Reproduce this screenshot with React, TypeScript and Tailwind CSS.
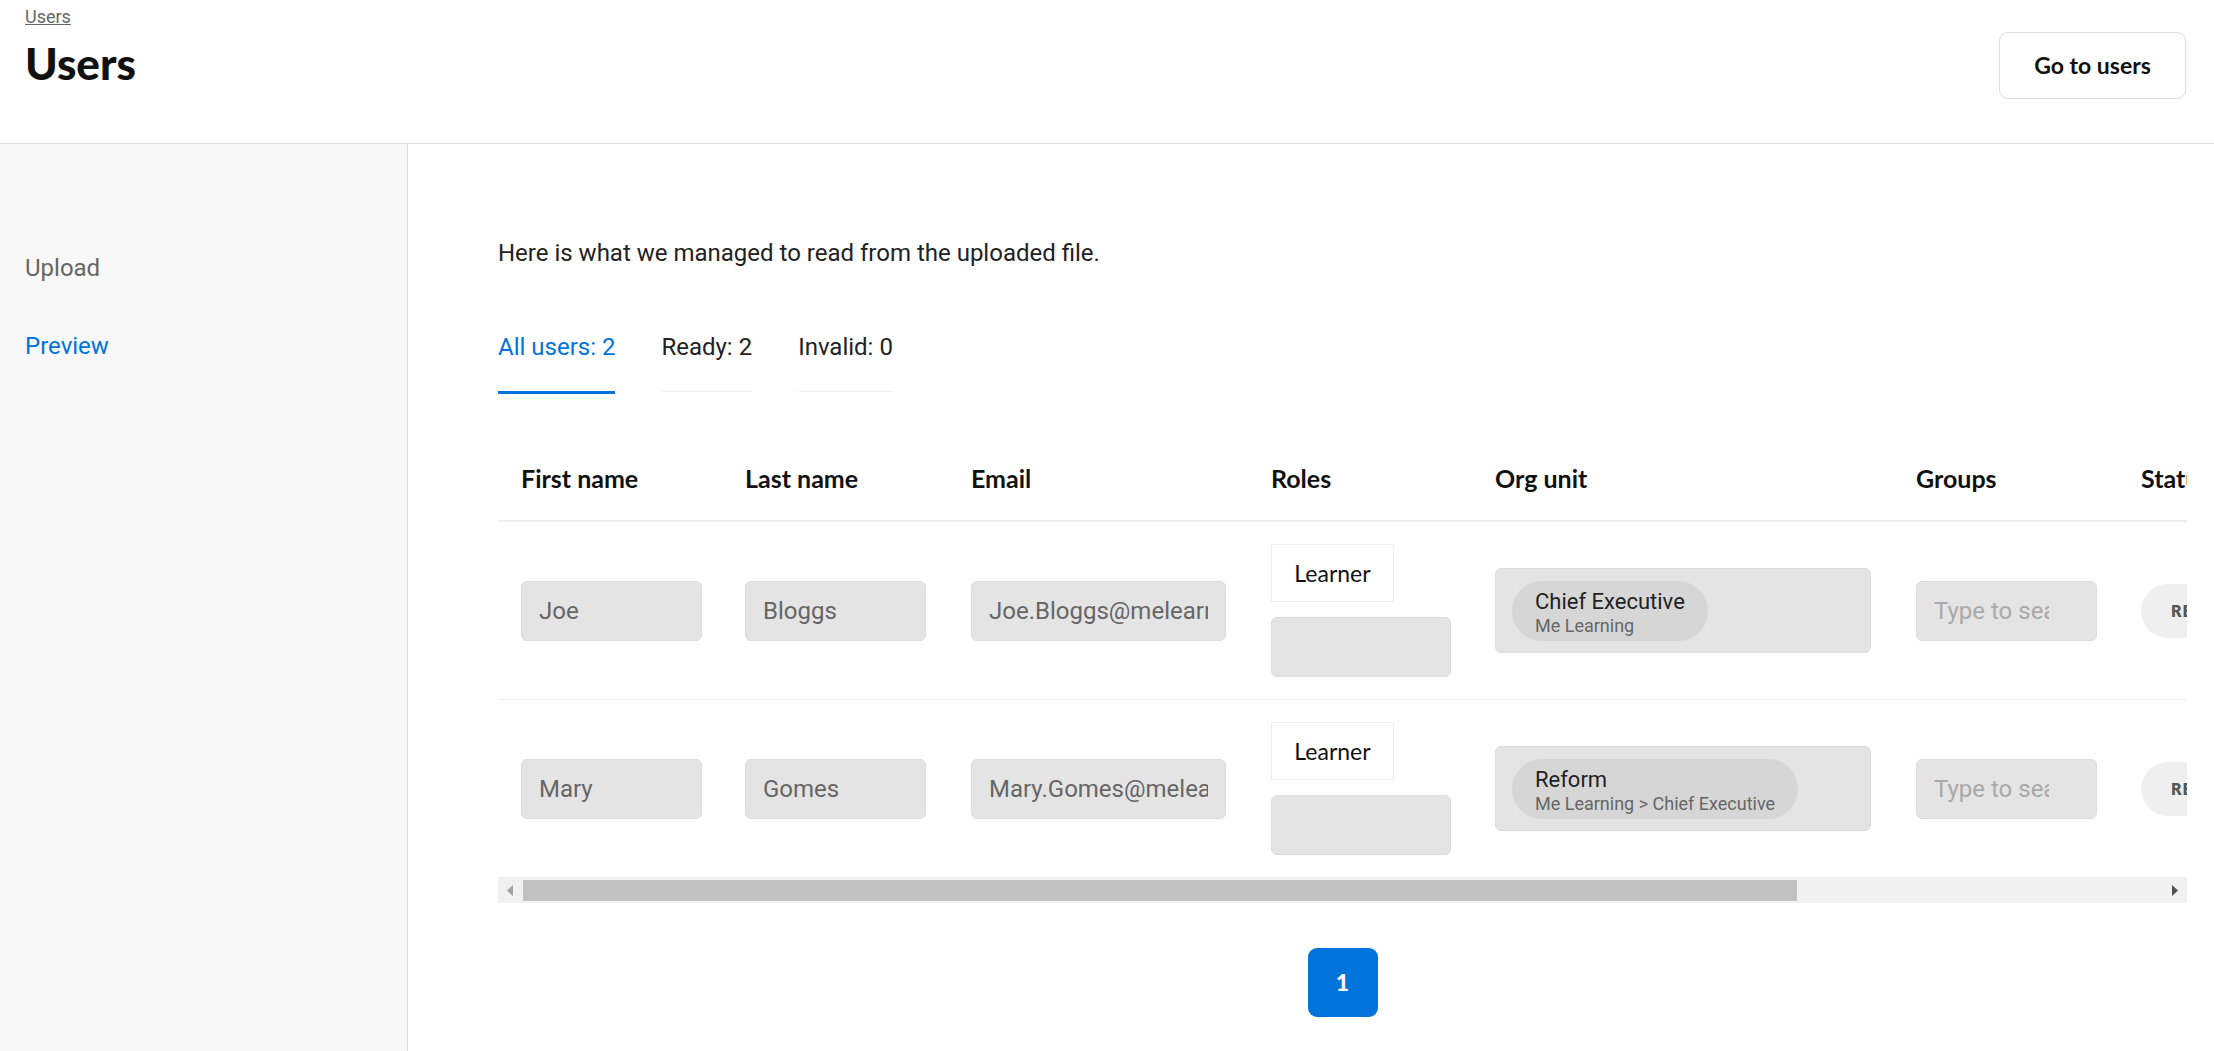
import React from "react";

const Input = ({ text, w, placeholder }: { text: string; w: string; placeholder?: boolean }) => (
  <div
    className={`${w} h-[60px] rounded-[6px] bg-[#e4e4e4] border border-[#dcdcdc] flex items-center overflow-hidden whitespace-nowrap text-[24px] ${
      placeholder ? "pl-[17px] pr-[47px] text-[#a9a9a9]" : "pl-[17px] pr-[17px] text-[#666666]"
    }`}
  >
    <span className="block overflow-hidden">{text}</span>
  </div>
);

const Roles = () => (
  <div className="flex flex-col gap-[15px]">
    <div className="w-[123px] h-[58px] border border-[#eeeeee] bg-white flex items-center justify-center text-[23px] font-['Lato',sans-serif] text-[#111111]">
      Learner
    </div>
    <div className="w-[180px] h-[60px] rounded-[6px] bg-[#e4e4e4] border border-[#dcdcdc]" />
  </div>
);

const Org = ({ name, path }: { name: string; path: string }) => (
  <div className="w-[376px] h-[85px] rounded-[6px] bg-[#e4e4e4] border border-[#dcdcdc] pl-[16px] flex items-center">
    <div className="inline-flex flex-col rounded-full bg-[#d6d6d6] pl-[23px] pr-[23px] pt-[7px] pb-[4px] whitespace-nowrap">
      <span className="text-[22px] leading-[27px] text-[#222222]">{name}</span>
      <span className="text-[18px] leading-[22px] text-[#666666]">{path}</span>
    </div>
  </div>
);

const Status = () => (
  <div className="h-[54px] rounded-full bg-[#efefef] pl-[30px] pr-[30px] flex items-center text-[16px] font-extrabold tracking-[1px] text-[#555555] font-['Lato',sans-serif]">
    READY
  </div>
);

const Row = ({ first, last, email, org, path }: { first: string; last: string; email: string; org: string; path: string }) => (
  <div className="flex h-[178px] items-center border-b border-[#eeeeee]">
    <div className="w-[224px] shrink-0 pl-[23px]">
      <Input text={first} w="w-[181px]" />
    </div>
    <div className="w-[226px] shrink-0 pl-[23px]">
      <Input text={last} w="w-[181px]" />
    </div>
    <div className="w-[300px] shrink-0 pl-[23px]">
      <Input text={email} w="w-[255px]" />
    </div>
    <div className="w-[224px] shrink-0 pl-[23px]">
      <Roles />
    </div>
    <div className="w-[421px] shrink-0 pl-[23px]">
      <Org name={org} path={path} />
    </div>
    <div className="w-[225px] shrink-0 pl-[23px]">
      <Input text="Type to search" w="w-[181px]" placeholder />
    </div>
    <div className="w-[200px] shrink-0 pl-[23px] flex">
      <Status />
    </div>
  </div>
);

export default function App() {
  const headers: [string, string][] = [
    ["First name", "w-[224px]"],
    ["Last name", "w-[226px]"],
    ["Email", "w-[300px]"],
    ["Roles", "w-[224px]"],
    ["Org unit", "w-[421px]"],
    ["Groups", "w-[225px]"],
    ["Status", "w-[200px]"],
  ];
  return (
    <div className="w-[2214px] h-[1051px] overflow-hidden bg-white flex flex-col font-['Roboto',sans-serif]">
      <header className="h-[144px] shrink-0 border-b border-[#dddddd] flex justify-between pl-[25px] pr-[28px]">
        <div className="pt-[3px]">
          <a className="block text-[18px] leading-[27px] text-[#666666] underline">Users</a>
          <h1 className="mt-[7px] text-[44px] leading-[53px] font-black text-[#111111] font-['Lato',sans-serif]">Users</h1>
        </div>
        <button className="mt-[32px] w-[187px] h-[67px] rounded-[9px] border-[1.5px] border-[#dddddd] bg-white text-[23px] font-bold font-['Lato',sans-serif] text-[#111111]">
          Go to users
        </button>
      </header>
      <div className="flex flex-1 min-h-0">
        <aside className="w-[408px] shrink-0 bg-[#f8f8f8] border-r border-[#dddddd] pt-[106px] pl-[25px]">
          <div className="text-[24px] leading-[36px] text-[#666666]">Upload</div>
          <div className="mt-[42px] text-[24px] leading-[36px] text-[#0073dd]">Preview</div>
        </aside>
        <main className="flex-1 min-w-0 pl-[90px] pr-[27px] pt-[91px]">
          <p className="text-[24px] leading-[36px] text-[#222222]">Here is what we managed to read from the uploaded file.</p>
          <div className="mt-[58px] flex items-start gap-[46px] text-[24px] leading-[36px]">
            <div className="pb-[26px] border-b-[3px] border-[#0073dd] text-[#0073dd]">All users: 2</div>
            <div className="pb-[26px] border-b border-[#f3f3f3] text-[#222222]">Ready: 2</div>
            <div className="pb-[26px] border-b border-[#f3f3f3] text-[#222222]">Invalid: 0</div>
          </div>
          <div className="mt-[46px] overflow-hidden">
            <div className="w-max">
              <div className="flex h-[82px] pt-[20px] border-b-2 border-[#eeeeee]">
                {headers.map(([h, w]) => (
                  <div key={h} className={`${w} shrink-0 pl-[23px] text-[25px] leading-[36px] font-bold text-[#111111] font-['Lato',sans-serif]`}>
                    {h}
                  </div>
                ))}
              </div>
              <Row first="Joe" last="Bloggs" email="Joe.Bloggs@melearning.com" org="Chief Executive" path="Me Learning" />
              <Row first="Mary" last="Gomes" email="Mary.Gomes@melearning.com" org="Reform" path="Me Learning > Chief Executive" />
            </div>
            <div className="h-[25px] bg-[#f1f1f1] flex items-center">
              <div className="w-[25px] h-full flex items-center justify-center shrink-0">
                <svg width="7" height="11" viewBox="0 0 7 11">
                  <path d="M6 0 L0 5.5 L6 11 Z" fill="#a3a3a3" />
                </svg>
              </div>
              <div className="w-[1274px] h-[21px] bg-[#c1c1c1] shrink-0" />
              <div className="flex-1" />
              <div className="w-[25px] h-full flex items-center justify-center shrink-0">
                <svg width="7" height="11" viewBox="0 0 7 11">
                  <path d="M1 0 L7 5.5 L1 11 Z" fill="#505050" />
                </svg>
              </div>
            </div>
          </div>
          <div className="mt-[45px] flex justify-center">
            <button className="w-[70px] h-[69px] rounded-[9px] bg-[#0074db] text-white font-black text-[23px] font-['Lato',sans-serif]">1</button>
          </div>
        </main>
      </div>
    </div>
  );
}
